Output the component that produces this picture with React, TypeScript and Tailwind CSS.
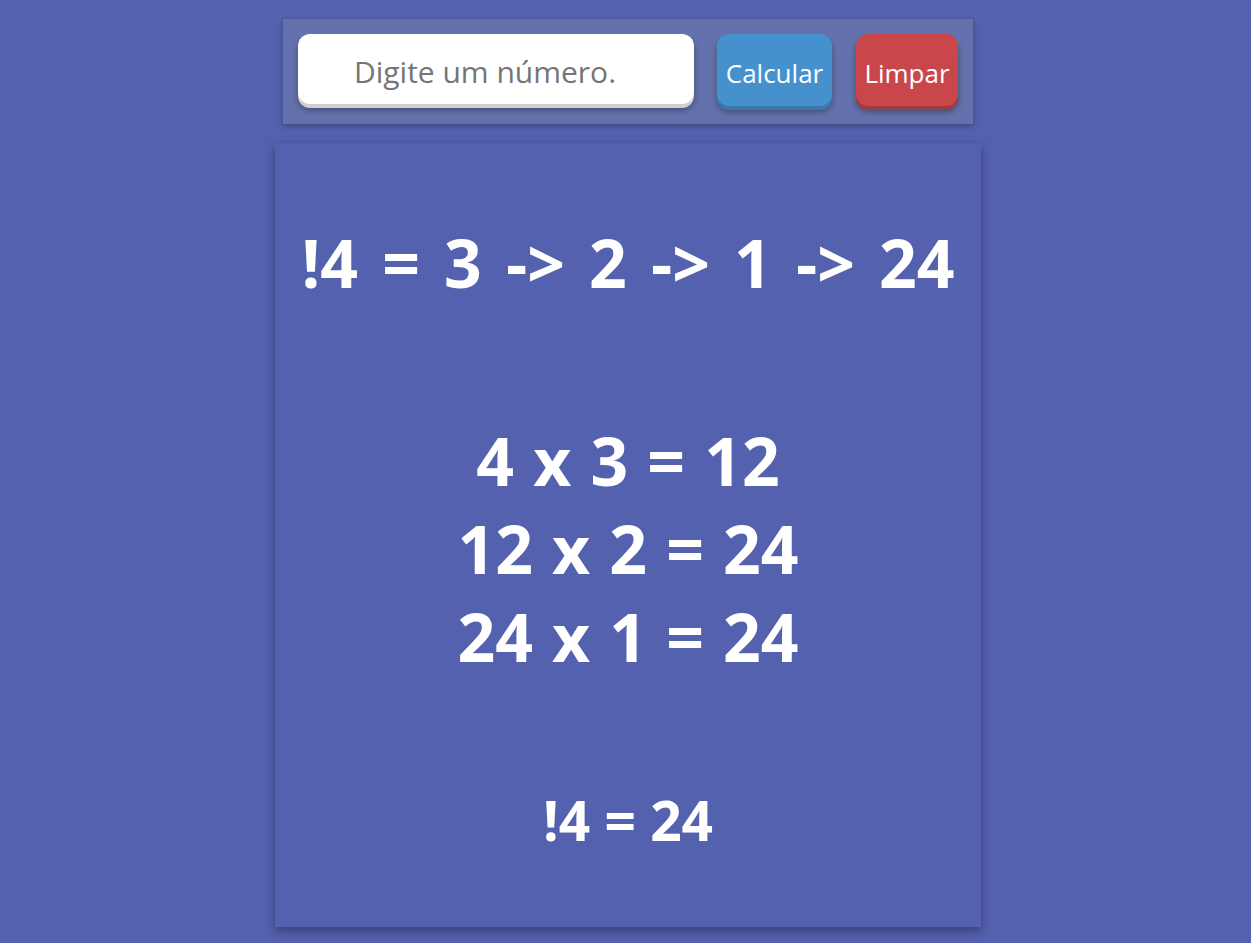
import React from "react";

export default function App() {
  const font = { fontFamily: '"Open Sans", "Noto Sans", sans-serif' };
  return (
    <div className="min-h-[943px] w-full bg-[#5461ae] flex flex-col items-center pl-[5px] pt-[19px]" style={font}>
      <div className="w-[690px] h-[105px] bg-[#6372ad] shadow-[0_2px_6px_rgba(0,0,0,0.3)] flex items-start pt-[15px] pl-[15px]">
        <div className="w-[396px] h-[70px] bg-white rounded-[12px] shadow-[0_4px_0_#cfcfcf,0_6px_6px_rgba(0,0,0,0.35)] flex items-center justify-center pr-[22px] pt-[6px]">
          <span className="text-[30px] text-[#757575] leading-none">Digite um número.</span>
        </div>
        <button className="ml-[23px] w-[115px] h-[72px] bg-[#4591cd] rounded-[12px] shadow-[0_4px_0_#3a78aa,0_6px_6px_rgba(0,0,0,0.35)] text-white text-[26px] leading-none flex items-center justify-center pt-[5px]">
          Calcular
        </button>
        <button className="ml-[24px] w-[102px] h-[72px] bg-[#c9474b] rounded-[12px] shadow-[0_4px_0_#a33a3e,0_6px_6px_rgba(0,0,0,0.35)] text-white text-[26px] leading-none flex items-center justify-center pt-[5px]">
          Limpar
        </button>
      </div>
      <div className="mt-[19px] w-[706px] h-[784px] bg-[#5461ae] shadow-[0_4px_10px_rgba(0,0,0,0.35)] flex flex-col items-center text-white font-bold">
        <div className="mt-[75px] text-[66px] leading-[88px] whitespace-nowrap [word-spacing:7px]">!4 = 3 -&gt; 2 -&gt; 1 -&gt; 24</div>
        <div className="mt-[110px] flex flex-col items-center text-[66px] leading-[88px] [word-spacing:2px]">
          <div>4 x 3 = 12</div>
          <div>12 x 2 = 24</div>
          <div>24 x 1 = 24</div>
        </div>
        <div className="mt-[105px] text-[55px] leading-[70px]">!4 = 24</div>
      </div>
    </div>
  );
}
